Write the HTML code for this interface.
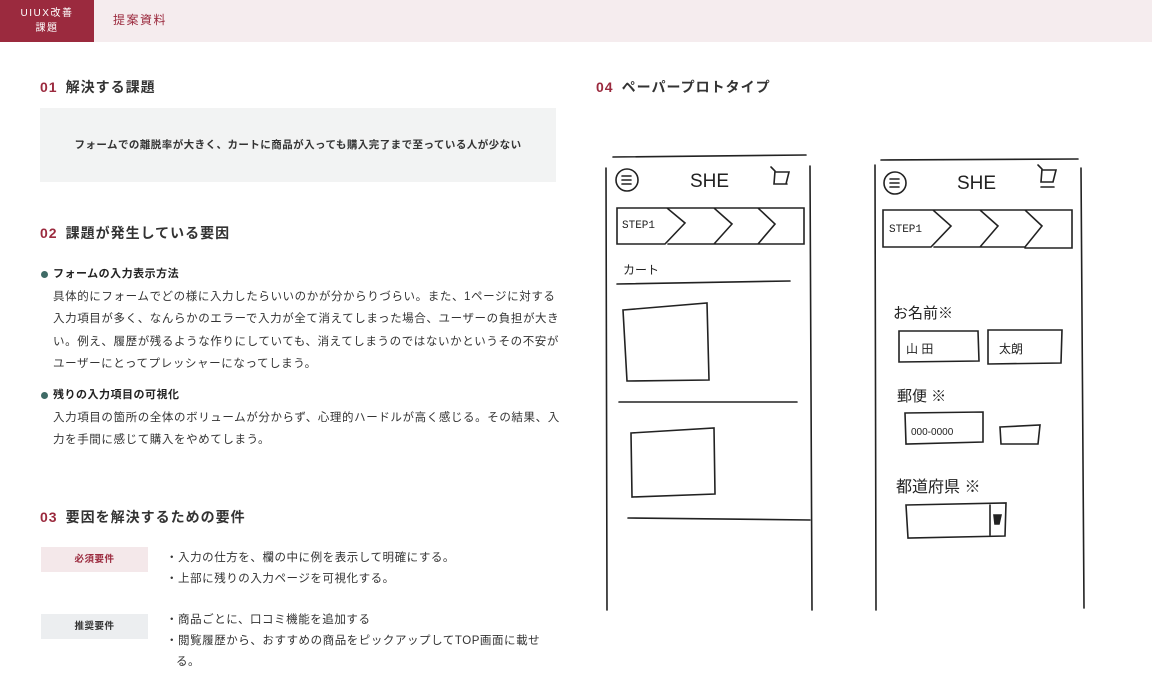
<!DOCTYPE html>
<html><head><meta charset="utf-8">
<style>
*{margin:0;padding:0;box-sizing:border-box}
body{width:1152px;height:700px;background:#fff;font-family:"Liberation Sans","Noto Sans CJK JP",sans-serif;color:#333;position:relative;overflow:hidden}
.hd{position:absolute;left:0;top:0;width:1152px;height:42px;background:#f5ecee}
.logo{position:absolute;left:0;top:0;width:94px;height:42px;background:#9b2a3e;color:#fff;font-size:10px;text-align:center;line-height:15px;padding-top:6px;letter-spacing:1.5px}
.ttl{position:absolute;left:113px;top:11px;font-size:12px;color:#9b2a3e;letter-spacing:1.5px}
.h{position:absolute;font-size:14px;font-weight:bold;color:#333;letter-spacing:1px}
.h b{color:#9b2a3e;margin-right:8px}
.box{position:absolute;left:40px;top:108px;width:516px;height:74px;background:#f2f3f3;font-size:10.5px;font-weight:bold;text-align:center;line-height:74px;color:#333;letter-spacing:0.45px}
.it{position:absolute;left:40px;width:520px}
.it .t{font-size:11px;font-weight:bold;color:#222;padding-left:13px;position:relative;line-height:16px;letter-spacing:0.5px}
.it .t:before{content:"";position:absolute;left:1px;top:5px;width:7px;height:7px;border-radius:50%;background:#3f6b66}
.it p{font-size:11.5px;line-height:22.3px;padding-left:13px;margin-top:4px;color:#333;letter-spacing:0.6px}
.tag{position:absolute;left:41px;width:107px;height:25px;font-size:9.5px;font-weight:bold;text-align:center;line-height:25px;letter-spacing:0.5px}
.ls{position:absolute;left:166px;font-size:11.5px;line-height:20.8px;width:380px;color:#333;letter-spacing:0.55px}
.ls div{padding-left:10px;text-indent:-10px}
svg{position:absolute;left:0;top:0}
</style></head><body>
<div class="hd"></div>
<div class="logo">UIUX改善<br>課題</div>
<div class="ttl">提案資料</div>

<div class="h" style="left:40px;top:77px"><b>01</b>解決する課題</div>
<div class="box">フォームでの離脱率が大きく、カートに商品が入っても購入完了まで至っている人が少ない</div>

<div class="h" style="left:40px;top:223px"><b>02</b>課題が発生している要因</div>
<div class="it" style="top:266px"><div class="t">フォームの入力表示方法</div>
<p>具体的にフォームでどの様に入力したらいいのかが分からりづらい。また、1ページに対する入力項目が多く、なんらかのエラーで入力が全て消えてしまった場合、ユーザーの負担が大きい。例え、履歴が残るような作りにしていても、消えてしまうのではないかというその不安がユーザーにとってプレッシャーになってしまう。</p></div>
<div class="it" style="top:387px"><div class="t">残りの入力項目の可視化</div>
<p>入力項目の箇所の全体のボリュームが分からず、心理的ハードルが高く感じる。その結果、入力を手間に感じて購入をやめてしまう。</p></div>

<div class="h" style="left:40px;top:507px"><b>03</b>要因を解決するための要件</div>
<div class="tag" style="top:547px;background:#f4e8ea;color:#9b2a3e">必須要件</div>
<div class="ls" style="top:548px"><div>・入力の仕方を、欄の中に例を表示して明確にする。</div><div>・上部に残りの入力ページを可視化する。</div></div>
<div class="tag" style="top:614px;background:#eceef0;color:#333">推奨要件</div>
<div class="ls" style="top:610px"><div>・商品ごとに、口コミ機能を追加する</div><div>・閲覧履歴から、おすすめの商品をピックアップしてTOP画面に載せる。</div></div>

<div class="h" style="left:596px;top:77px"><b>04</b>ペーパープロトタイプ</div>

<svg width="1152" height="700" fill="none" stroke="#222" stroke-width="1.6" stroke-linecap="round">
<path d="M613 157 L806 155 M606 168 L607 610 M810 166 L812 610"/>
<circle cx="627" cy="180" r="11"/><path d="M622 176h9M622 180h9M622 184h9"/>
<text x="690" y="187" font-size="19" fill="#222" stroke="none" font-family="Liberation Sans">SHE</text>
<path d="M771 167l4 4-1 13h12l3-12h-14M774 184h13"/>
<path d="M617 208h50l18 15-20 21h-48zM667 208h47l18 16-18 20h-46M714 208h44l17 16-17 20h-44M758 208h46v36h-46"/>
<text x="622" y="228" font-size="11" fill="#222" stroke="none" font-family="Liberation Mono">STEP1</text>
<text x="623" y="274" font-size="12" fill="#222" stroke="none">カート</text>
<path d="M617 284 L790 281"/>
<path d="M623 310 L707 303 L709 380 L627 381 Z"/>
<path d="M619 402 L797 402"/>
<path d="M631 433 L714 428 L715 494 L632 497 Z"/>
<path d="M628 518 L810 520"/>
<path d="M881 160 L1078 159 M875 165 L876 610 M1081 168 L1084 608"/>
<circle cx="895" cy="183" r="11"/><path d="M890 179h9M890 183h9M890 187h9"/>
<text x="957" y="189" font-size="19" fill="#222" stroke="none" font-family="Liberation Sans">SHE</text>
<path d="M1038 165l4 4-1 13h12l3-12h-14M1041 187h13"/>
<path d="M883 210h50l18 16-20 21h-48zM933 210h47l18 16-18 21h-46M980 210h45l17 16-17 21h-45M1025 210h47v38h-47"/>
<text x="889" y="232" font-size="11" fill="#222" stroke="none" font-family="Liberation Mono">STEP1</text>
<text x="893" y="318" font-size="15" fill="#222" stroke="none">お名前※</text>
<path d="M899 331 L978 331 L979 361 L899 362 Z M988 330 L1062 330 L1061 363 L988 364 Z"/>
<text x="906" y="353" font-size="12" fill="#222" stroke="none">山 田</text>
<text x="999" y="353" font-size="12" fill="#222" stroke="none">太朗</text>
<text x="897" y="401" font-size="15" fill="#222" stroke="none">郵便 ※</text>
<path d="M905 413 L983 412 L983 442 L906 444 Z M1000 427 L1040 425 L1038 444 L1001 444 Z"/>
<text x="911" y="435" font-size="10" fill="#222" stroke="none">000-0000</text>
<text x="896" y="492" font-size="16" fill="#222" stroke="none">都道府県 ※</text>
<path d="M906 505 L1006 503 L1005 536 L908 538 Z M990 505 L990 535"/>
<path d="M994 515h7l-2 9h-4z" fill="#222"/>
</svg>
</body></html>
